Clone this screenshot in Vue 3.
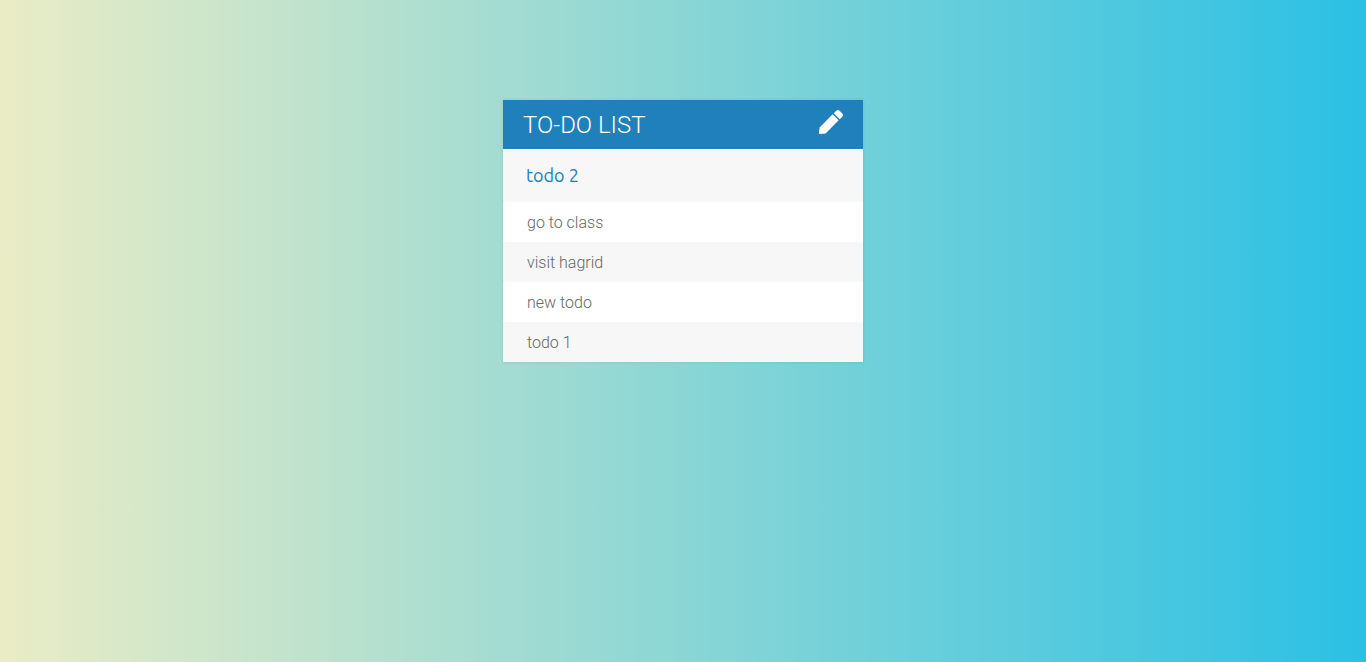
<script setup>
import { ref } from 'vue'

const draft = ref('todo 2')
const formOpen = ref(true)
const todos = ref(['go to class', 'visit hagrid', 'new todo', 'todo 1'])

function addTodo() {
  const text = draft.value.trim()
  if (!text) return
  todos.value.push(text)
  draft.value = ''
}
</script>

<template>
  <main class="page">
    <section class="card">
      <header class="head">
        <h1 class="title">To-Do List</h1>
        <button class="toggle" type="button" aria-label="Toggle new todo field" @click="formOpen = !formOpen">
          <svg class="pencil" viewBox="0 0 512 512" aria-hidden="true">
            <path fill="currentColor" d="M290.740 93.240l128.020 128.020-277.990 277.990-114.140 12.600C11.350 513.540-1.560 500.620.140 485.340l12.700-114.220 277.900-277.880zm207.200-19.060l-60.110-60.110c-18.750-18.750-49.160-18.750-67.910 0l-56.550 56.550 128.020 128.020 56.550-56.550c18.750-18.760 18.750-49.160 0-67.910z" />
          </svg>
        </button>
      </header>
      <form v-if="formOpen" @submit.prevent="addTodo">
        <input v-model="draft" class="field" type="text" aria-label="New todo" />
      </form>
      <ul class="list">
        <li v-for="todo in todos" :key="todo" class="item">{{ todo }}</li>
      </ul>
    </section>
  </main>
</template>

<style>
body {
  margin: 0;
}
</style>

<style scoped>
.page {
  box-sizing: border-box;
  min-height: 100vh;
  padding: 100px 16px;
  background: linear-gradient(to left, #2bc0e4, #eaecc6);
  font-family: Roboto, "Liberation Sans", sans-serif;
}

.card {
  max-width: 360px;
  margin: 0 auto;
  background: #f7f7f7;
  box-shadow: 0 0 3px rgba(0, 0, 0, 0.1);
}

.head {
  display: flex;
  align-items: flex-start;
  justify-content: space-between;
  padding: 10px 20px 8px;
  background: #2080bb;
  color: #fff;
}

.title {
  margin: 0;
  font-size: 24px;
  font-weight: 300;
  line-height: 31px;
  text-transform: uppercase;
}

.toggle {
  display: block;
  padding: 0;
  border: 0;
  background: none;
  color: inherit;
  cursor: pointer;
}

.pencil {
  display: block;
  width: 24px;
  height: 24px;
}

.field {
  box-sizing: border-box;
  display: block;
  width: 100%;
  height: 53px;
  padding: 12px 13px 14px 20px;
  border: 3px solid transparent;
  outline: none;
  background: #f7f7f7;
  color: #2080bb;
  font-family: Ubuntu, "Noto Sans", sans-serif;
  font-size: 18px;
}

.list {
  margin: 0;
  padding: 0;
  list-style: none;
}

.item {
  padding: 2px 24px 0;
  background: #fff;
  color: #666;
  font-size: 16px;
  font-weight: 300;
  line-height: 38px;
}

.item:nth-child(2n) {
  background: #f7f7f7;
}
</style>
